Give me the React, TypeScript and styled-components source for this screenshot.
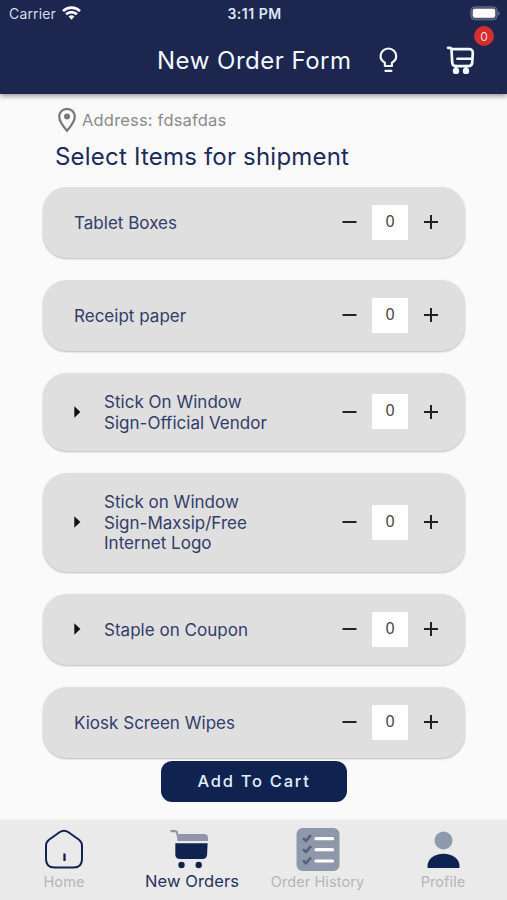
import React from 'react';
import styled, { createGlobalStyle } from 'styled-components';

const GlobalStyle = createGlobalStyle`
  * { box-sizing: border-box; }
  body { margin: 0; background: #fafafa; font-family: Inter, sans-serif; }
  button { font: inherit; border: 0; padding: 0; background: none; }
`;

const NAVY = '#10224f';

const Screen = styled.div`
  width: 507px;
  height: 900px;
  display: flex;
  flex-direction: column;
  overflow: hidden;
  background: #fafafa;
`;

const Header = styled.header`
  position: relative;
  height: 94px;
  flex: none;
  background: #1d264f;
  color: #f1f9ff;
  box-shadow: 0 2px 5px rgba(0, 0, 0, 0.42);
`;

const StatusBar = styled.div`
  height: 28px;
  display: grid;
  grid-template-columns: 1fr auto 1fr;
  align-items: center;
  padding: 0 7px 0 9px;
  font-size: 14px;
`;

const Carrier = styled.div`
  display: flex;
  align-items: center;
  gap: 6px;
  margin-top: -2px;
  color: #d5dcee;
  letter-spacing: 0.15px;
`;

const Clock = styled.div`
  margin-top: -2px;
  font-weight: 600;
  font-size: 14px;
  letter-spacing: 0.5px;
  color: #dfe7f6;
`;

const BatterySlot = styled.div`
  display: flex;
  justify-content: flex-end;
`;

const TitleRow = styled.div`
  height: 64px;
  display: flex;
  align-items: center;
  padding: 0 32px 0 157px;
`;

const Title = styled.h1`
  margin: 0;
  width: 219px;
  font-size: 24px;
  font-weight: 400;
  letter-spacing: 0.5px;
  white-space: nowrap;
`;

const CartButton = styled.button`
  margin-left: auto;
  color: inherit;
  display: flex;
`;

const Badge = styled.span`
  position: absolute;
  top: 26px;
  right: 13px;
  width: 20px;
  height: 20px;
  border-radius: 50%;
  background: #d32d2f;
  color: #f7d9d9;
  font-size: 12px;
  line-height: 21px;
  text-align: center;
`;

const Main = styled.main`
  flex: 1;
  display: flex;
  flex-direction: column;
  padding: 13px 42px 0 43px;
`;

const Address = styled.div`
  height: 26px;
  display: flex;
  align-items: center;
  gap: 5px;
  padding-left: 14px;
  font-size: 16.5px;
  letter-spacing: 0.18px;
  color: #8b8b8b;
`;

const Heading = styled.h2`
  margin: 7px 0 0 12px;
  height: 34px;
  line-height: 34px;
  font-size: 24px;
  font-weight: 400;
  letter-spacing: 0.2px;
  color: #1c2b5c;
  white-space: nowrap;
`;

const List = styled.div`
  display: flex;
  flex-direction: column;
  gap: 22px;
  margin-top: 13px;
`;

const Card = styled.div<{ $height: number }>`
  height: ${(p) => p.$height}px;
  display: flex;
  align-items: center;
  padding: 0 25px 0 31px;
  border-radius: 24px;
  background: #dfdfdf;
  box-shadow: 0 1px 2px rgba(0, 0, 0, 0.25);
`;

const Arrow = styled.span`
  width: 30px;
  padding-bottom: 1px;
  display: flex;
`;

const Label = styled.div`
  padding-top: 1px;
  font-size: 17px;
  line-height: 20.8px;
  letter-spacing: 0.02px;
  color: #323d69;
  white-space: pre;
`;

const Stepper = styled.div`
  margin-left: auto;
  display: flex;
  align-items: center;
  gap: 14px;
  color: #222;
  padding-bottom: 1px;
`;

const StepButton = styled.button`
  width: 18px;
  height: 18px;
  display: flex;
  align-items: center;
  justify-content: center;
  color: inherit;
`;

const Quantity = styled.span`
  width: 36px;
  height: 35px;
  background: #fff;
  color: #444;
  font-family: 'Noto Sans', sans-serif;
  font-size: 16px;
  line-height: 33px;
  text-align: center;
`;

const AddButton = styled.button`
  align-self: center;
  margin: 3px 1px 0 0;
  width: 186px;
  height: 41px;
  padding-bottom: 1px;
  border-radius: 11px;
  background: ${NAVY};
  color: #e0effc;
  font-size: 16.5px;
  font-weight: 500;
  letter-spacing: 1.75px;
  text-indent: 1px;
`;

const TabBar = styled.nav`
  flex: none;
  height: 80px;
  display: grid;
  grid-template-columns: 128px 128px 123px 128px;
  background: #eaeaea;
  box-shadow: 0 -1px 1px rgba(0, 0, 0, 0.03);
`;

const Tab = styled.a<{ $active?: boolean }>`
  display: flex;
  flex-direction: column;
  align-items: center;
  color: ${(p) => (p.$active ? '#26325f' : '#b4b5b8')};
  font-size: ${(p) => (p.$active ? 16.5 : 14.5)}px;
  line-height: 20px;
  letter-spacing: 0.1px;
  white-space: nowrap;
`;

const TabIcon = styled.span<{ $raise?: boolean }>`
  height: ${(p) => (p.$raise ? 51 : 52)}px;
  padding: 8px ${(p) => (p.$raise ? 7 : 0)}px 0 0;
  display: flex;
`;

const WifiIcon = () => (
  <svg width="19" height="14" viewBox="0 0 19 14" fill="none" stroke="#fff" strokeWidth="2.700">
    <path d="M1 5.100a12.200 12.200 0 0 1 17 0" />
    <path d="M4.100 8.300a7.800 7.800 0 0 1 10.800 0" />
    <path d="M6.600 10.600a4.200 4.200 0 0 1 5.800 0L9.500 13.800z" fill="#fff" stroke="none" />
  </svg>
);

const BatteryIcon = () => (
  <svg width="30" height="16" viewBox="0 0 30 16">
    <rect x="0.800" y="0.800" width="26.400" height="13" rx="4" fill="#47506f" stroke="#646c89" />
    <rect x="2.800" y="2.800" width="22.400" height="9" rx="2" fill="#fff" />
    <path d="M28.300 5.200v4.400c1.800-.8 1.800-3.600 0-4.400z" fill="#747b94" />
  </svg>
);

const BulbIcon = () => (
  <svg width="24" height="26" viewBox="0 0 24 26" fill="none" stroke="currentColor" strokeWidth="2.200">
    <path d="M8.900 19v-3.300C6 14.200 4.600 12 4.600 9.300a7.800 7.800 0 0 1 15.600 0c0 2.700-1.400 4.900-4.300 6.400V19z" strokeLinejoin="round" />
    <path d="M9.400 23.800h6" strokeLinecap="round" />
  </svg>
);

const HeaderCartIcon = () => (
  <svg width="29" height="30" viewBox="0 0 29 30" fill="none" stroke="currentColor" strokeWidth="2.700" strokeLinecap="round" strokeLinejoin="round">
    <path d="M2 2.800h1.700q1.700 0 1.800 1.800L6.200 17.500q.3 3.700 3.600 3.700h12.400q3.800 0 4-3.500L26.800 8q.2-3.800-3.800-3.800H5.600" />
    <path d="M11.300 13.700h13.500" strokeWidth="2.500" />
    <path d="M10 21v5M20 21v5" />
    <circle cx="10" cy="25.900" r="2.300" fill="currentColor" strokeWidth="1.800" />
    <circle cx="20" cy="25.900" r="2.300" fill="currentColor" strokeWidth="1.800" />
  </svg>
);

const PinIcon = () => (
  <svg width="20" height="26" viewBox="0 0 20 26" fill="none" stroke="#777" strokeWidth="2.200">
    <path d="M10 1.800a7.800 7.800 0 0 0-7.800 7.800c0 5.500 7.800 14.200 7.800 14.200s7.800-8.700 7.800-14.200A7.800 7.800 0 0 0 10 1.800z" />
    <circle cx="10" cy="9.500" r="3" fill="#777" stroke="none" />
  </svg>
);

const ArrowIcon = () => (
  <svg width="8" height="12" viewBox="0 0 8 12">
    <path d="M0.300 0.300 6.400 6 0.300 11.700z" fill="#111" />
  </svg>
);

const MinusIcon = () => (
  <svg width="16" height="16" viewBox="0 0 16 16" stroke="currentColor" strokeWidth="2">
    <path d="M1.500 8h14" />
  </svg>
);

const PlusIcon = () => (
  <svg width="16" height="16" viewBox="0 0 16 16" stroke="currentColor" strokeWidth="2">
    <path d="M1 8h14M8 1v14" />
  </svg>
);

const HomeIcon = () => (
  <svg width="40" height="42" viewBox="0 0 40 42" fill="none" stroke={NAVY} strokeWidth="2">
    <path d="M15.500 4.300 5 11.700Q2 14 2 17.700V31q0 8.500 8.500 8.500h19q8.500 0 8.500-8.500V17.700q0-3.700-3-6L24.500 4.300q-4.500-3.200-9 0z" />
    <path d="M20.500 25.500v7.500" strokeWidth="2.300" />
  </svg>
);

const OrdersIcon = () => (
  <svg width="40" height="42" viewBox="0 0 40 42">
    <path d="M1.500 3.200h4.700q1.400 0 1.800 2l.3 1.300" fill="none" stroke="#8f96a9" strokeWidth="2.200" />
    <path d="M7.500 6H35q4 0 4 4v3H8.500z" fill="#9096aa" />
    <path d="M6.300 15.300h32.300l-.5 11.200q-.4 4.500-4.800 4.500H11.300q-4.800 0-5-4.500z" fill={NAVY} />
    <circle cx="12.500" cy="37" r="3.200" fill={NAVY} />
    <circle cx="29.700" cy="37" r="3.200" fill={NAVY} />
  </svg>
);

const HistoryIcon = () => (
  <svg width="44" height="44" viewBox="0 0 44 44" fill="none">
    <rect x="0.500" y="0" width="43" height="43" rx="6" fill="#8e98aa" />
    {[10.700, 21.700, 33].map((y) => (
      <g key={y}>
        <path d={`M7 ${y - 0.5}l3 2.700 5-5.700`} stroke="#576179" strokeWidth="2.600" />
        <path d={`M20 ${y}h16.500`} stroke="#fff" strokeWidth="3.200" strokeLinecap="round" />
      </g>
    ))}
  </svg>
);

const ProfileIcon = () => (
  <svg width="34" height="42" viewBox="0 0 34 42">
    <circle cx="17.500" cy="12.500" r="9" fill="#8f9aad" />
    <path d="M1.500 40v-2c0-7 7-12.200 16-12.200s16 5.200 16 12.200v2z" fill={NAVY} />
  </svg>
);

const items = [
  { label: 'Tablet Boxes', height: 71 },
  { label: 'Receipt paper', height: 71 },
  { label: 'Stick On Window\nSign-Official Vendor', height: 78, expandable: true },
  { label: 'Stick on Window\nSign-Maxsip/Free\nInternet Logo', height: 99, expandable: true },
  { label: 'Staple on Coupon', height: 71, expandable: true },
  { label: 'Kiosk Screen Wipes', height: 71 },
];

export default function App() {
  return (
    <>
      <GlobalStyle />
      <Screen>
        <Header>
          <StatusBar>
            <Carrier>Carrier <WifiIcon /></Carrier>
            <Clock>3:11 PM</Clock>
            <BatterySlot><BatteryIcon /></BatterySlot>
          </StatusBar>
          <TitleRow>
            <Title>New Order Form</Title>
            <BulbIcon />
            <CartButton aria-label="Cart"><HeaderCartIcon /></CartButton>
          </TitleRow>
          <Badge>0</Badge>
        </Header>
        <Main>
          <Address><PinIcon />Address: fdsafdas</Address>
          <Heading>Select Items for shipment</Heading>
          <List>
            {items.map((item) => (
              <Card key={item.label} $height={item.height}>
                {item.expandable && <Arrow><ArrowIcon /></Arrow>}
                <Label>{item.label}</Label>
                <Stepper>
                  <StepButton aria-label="Decrease"><MinusIcon /></StepButton>
                  <Quantity>0</Quantity>
                  <StepButton aria-label="Increase"><PlusIcon /></StepButton>
                </Stepper>
              </Card>
            ))}
          </List>
          <AddButton>Add To Cart</AddButton>
        </Main>
        <TabBar>
          <Tab><TabIcon><HomeIcon /></TabIcon>Home</Tab>
          <Tab $active><TabIcon $raise><OrdersIcon /></TabIcon>New Orders</Tab>
          <Tab><TabIcon><HistoryIcon /></TabIcon>Order History</Tab>
          <Tab><TabIcon><ProfileIcon /></TabIcon>Profile</Tab>
        </TabBar>
      </Screen>
    </>
  );
}
